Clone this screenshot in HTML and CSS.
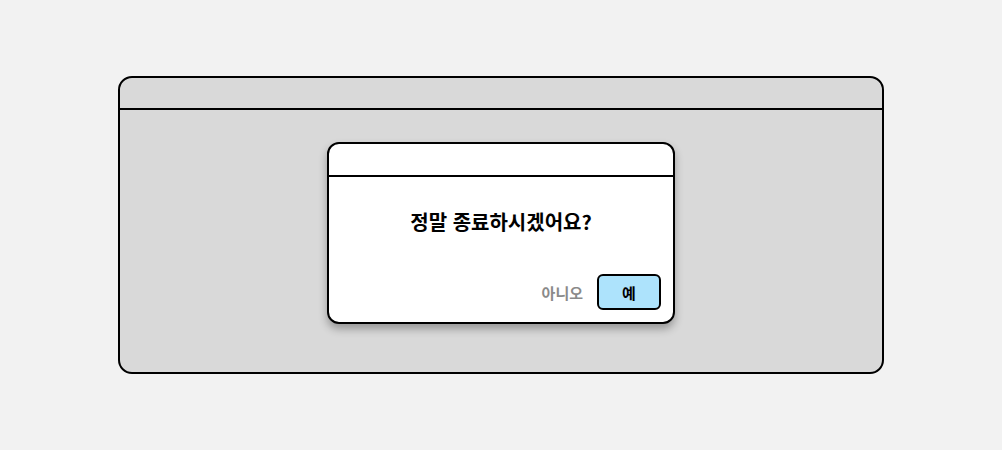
FILE: index.html
```html
<!DOCTYPE html>
<html lang="ko">
<head>
    <meta charset="UTF-8">
    <meta name="viewport" content="width=device-width, initial-scale=1.0">
    <title>종료 확인</title>
    <link rel="stylesheet" href="styles.css">
</head>
<body>
    <div class="screen">
        <div class="window">
            <div class="window-bar"></div>
            <div class="window-body">
                <div class="dialog">
                    <div class="dialog-bar"></div>
                    <div class="dialog-body">
                        <p class="message">정말 종료하시겠어요?</p>
                        <div class="actions">
                            <button class="btn-no">아니오</button>
                            <button class="btn-yes">예</button>
                        </div>
                    </div>
                </div>
            </div>
        </div>
    </div>
</body>
</html>
```

FILE: styles.css
```css
body {
    font-family: "Noto Sans CJK KR", "Noto Sans", sans-serif;
    background-color: #f2f2f2;
    color: #000;
    margin: 0;
    padding: 0;
}
.screen {
    height: 450px;
    display: flex;
    align-items: center;
    justify-content: center;
}
.window {
    width: 762px;
    background-color: #d9d9d9;
    border: 2px solid #000;
    border-radius: 14px;
    overflow: hidden;
}
.window-bar {
    height: 30px;
    border-bottom: 2px solid #000;
}
.window-body {
    height: 262px;
    padding-top: 32px;
    box-sizing: border-box;
    display: flex;
    justify-content: center;
    align-items: flex-start;
}
.dialog {
    width: 344px;
    background-color: #fff;
    border: 2px solid #000;
    border-radius: 12px;
    box-shadow: 0px 5px 8px rgba(0, 0, 0, 0.3);
    overflow: hidden;
}
.dialog-bar {
    height: 31px;
    border-bottom: 2px solid #000;
}
.dialog-body {
    padding: 31px 12px 12px;
}
.message {
    margin: 0;
    font-size: 20px;
    line-height: 28px;
    font-weight: 700;
    text-align: center;
}
.actions {
    margin-top: 38px;
    display: flex;
    justify-content: flex-end;
    align-items: center;
    gap: 8px;
}
.actions button {
    font-family: inherit;
    font-size: 15px;
    font-weight: 700;
    cursor: pointer;
}
.btn-no {
    background: none;
    border: none;
    color: #8a8a8a;
    padding: 0 6px;
    height: 36px;
}
.btn-yes {
    width: 64px;
    height: 36px;
    background-color: #ade3fc;
    border: 2px solid #000;
    border-radius: 6px;
    color: #000;
}
```
